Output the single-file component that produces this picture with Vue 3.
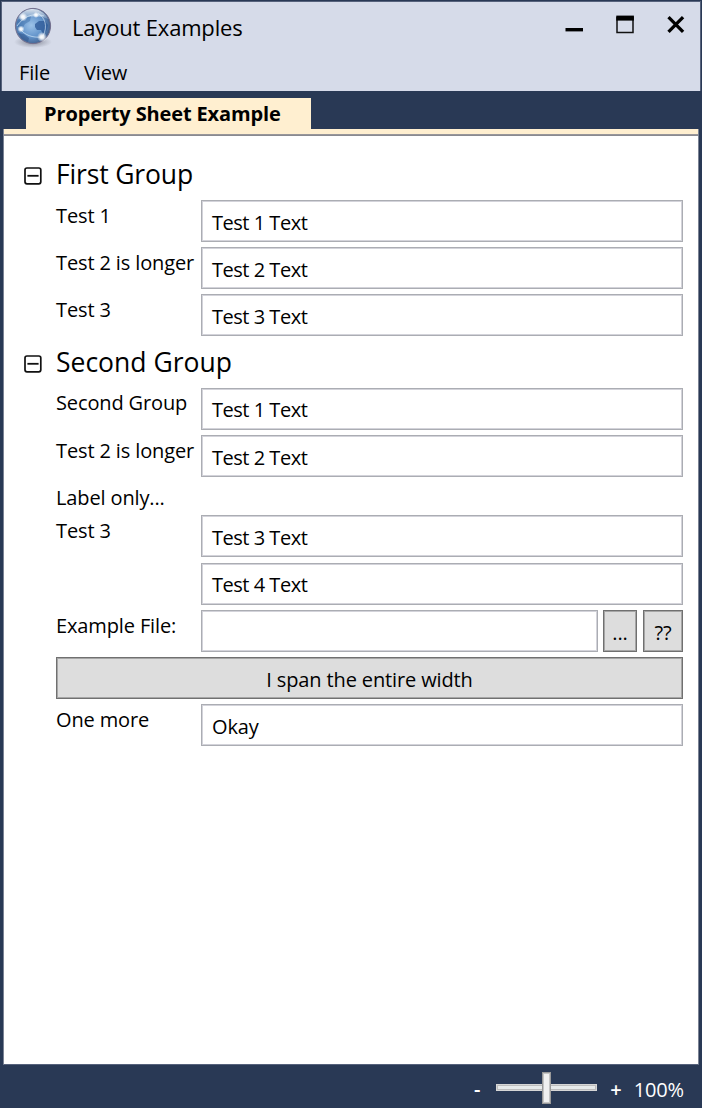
<script setup>
const groups = [
  {
    title: 'First Group',
    cls: 'first',
    rows: [
      { label: 'Test 1', text: 'Test 1 Text', h: 47 },
      { label: 'Test 2 is longer', text: 'Test 2 Text', h: 47 },
      { label: 'Test 3', text: 'Test 3 Text', h: 47 },
    ],
  },
  {
    title: 'Second Group',
    cls: 'second',
    rows: [
      { label: 'Second Group', text: 'Test 1 Text', h: 47, raised: true },
      { label: 'Test 2 is longer', text: 'Test 2 Text', h: 48 },
      { label: 'Label only...', h: 32, raised: true },
      { label: 'Test 3', text: 'Test 3 Text', h: 48 },
      { label: '', text: 'Test 4 Text', h: 47, raised: true },
      { label: 'Example File:', text: '', buttons: ['...', '??'], h: 47 },
      { wide: 'I span the entire width', h: 47 },
      { label: 'One more', text: 'Okay', h: 42 },
    ],
  },
]
</script>

<template>
  <div class="window">
    <header class="chrome">
      <div class="titlebar">
        <svg class="globe" width="40" height="42" viewBox="0 0 40 42">
          <defs>
            <radialGradient id="sea" cx="45%" cy="48%" r="55%">
              <stop offset="0" stop-color="#9cc2e8" />
              <stop offset=".6" stop-color="#6394cb" />
              <stop offset="1" stop-color="#41618f" />
            </radialGradient>
            <radialGradient id="shade">
              <stop offset="0" stop-color="#626675" stop-opacity=".75" />
              <stop offset="1" stop-color="#777b89" stop-opacity="0" />
            </radialGradient>
            <radialGradient id="glow">
              <stop offset="0" stop-color="#fff" />
              <stop offset=".4" stop-color="#fff" stop-opacity=".85" />
              <stop offset="1" stop-color="#fff" stop-opacity="0" />
            </radialGradient>
            <linearGradient id="gloss" x1="0" y1="0" x2="0" y2="1">
              <stop offset="0" stop-color="#fff" stop-opacity=".8" />
              <stop offset="1" stop-color="#fff" stop-opacity=".1" />
            </linearGradient>
          </defs>
          <ellipse cx="21" cy="36" rx="19" ry="6" fill="url(#shade)" />
          <circle cx="21" cy="20" r="17.6" fill="url(#sea)" stroke="#746f8d" stroke-width="1" />
          <path d="M8 11l6-6 8-1 1 4-4 2-1 5-5 3-3 5-4-2-1-5z" fill="#2e5e9c" opacity=".4" />
          <path d="M23 18l4-3 6 0 3 4-1 5-4 4-2-4-4 0-2-3z" fill="#2f5b98" opacity=".8" />
          <path d="M6 27l6 1 5 4-1 4-6-3z" fill="#284d85" opacity=".5" />
          <path d="M5 14C9 5 16 3 21 3s12 3 15 10C28 9 14 10 5 14z" fill="url(#gloss)" />
          <path d="M8 23c5 6 12 9 22 8M26 7c7 5 10 13 5 23M5 20C11 11 21 6 32 10" fill="none" stroke="#e3f3ff" stroke-width="1" opacity=".6" />
          <circle cx="11" cy="11" r="4.5" fill="url(#glow)" />
          <circle cx="30" cy="31" r="5" fill="url(#glow)" />
          <circle cx="9" cy="23" r="3.5" fill="url(#glow)" />
          <circle cx="24" cy="9" r="3" fill="url(#glow)" />
        </svg>
        <span class="title">Layout Examples</span>
        <svg class="controls" width="130" height="30" viewBox="0 0 130 30">
          <rect x="5.5" y="18" width="17.5" height="3.4" fill="#000" />
          <path d="M57 7.5h16v15H57z" fill="none" stroke="#111" stroke-width="1.5" />
          <rect x="56.3" y="5.6" width="17.6" height="5" fill="#000" />
          <path d="M108.5 7.2l14.6 14.6M123.1 7.2l-14.6 14.6" stroke="#000" stroke-width="3.3" fill="none" />
        </svg>
      </div>
      <nav class="menu">
        <span class="m-file">File</span>
        <span class="m-view">View</span>
      </nav>
    </header>

    <div class="tabs"><div class="tab"><span>Property Sheet Example</span></div></div>

    <main class="sheet">
      <section v-for="g in groups" :key="g.title" :class="['group', g.cls]">
        <h2 class="heading">
          <svg width="18" height="18" viewBox="0 0 18 18">
            <rect x="1" y="1" width="15.8" height="15.8" rx="2" fill="none" stroke="#111" stroke-width="1.7" />
            <path d="M3.4 8.8h11.2" stroke="#111" stroke-width="1.8" />
          </svg>
          <span>{{ g.title }}</span>
        </h2>
        <div v-for="(r, i) in g.rows" :key="i" :class="['row', { raised: r.raised }]" :style="{ height: r.h + 'px' }">
          <button v-if="r.wide" class="btn wide">{{ r.wide }}</button>
          <template v-else>
            <label class="label">{{ r.label }}</label>
            <div v-if="r.text !== undefined" class="field">{{ r.text }}</div>
            <button v-for="(b, n) in r.buttons" :key="b" :class="['btn', n ? 'help' : 'browse']">{{ b }}</button>
          </template>
        </div>
      </section>
    </main>

    <footer class="status">
      <span class="minus">-</span>
      <div class="slider"><i class="track"></i><i class="thumb"></i></div>
      <span class="plus">+</span>
      <span class="percent">100%</span>
    </footer>
  </div>
</template>

<style>
body {
  margin: 0;
  overflow: hidden;
}
</style>

<style scoped>
* {
  box-sizing: border-box;
}
.window {
  width: 702px;
  height: 1108px;
  background: #293955;
  display: flex;
  flex-direction: column;
  font: 20px/28px "Open Sans", "Noto Sans", sans-serif;
  letter-spacing: -0.13px;
  color: #000;
  padding-top: 1px;
  white-space: nowrap;
}
.chrome {
  margin: 0 1px;
  height: 90px;
  flex: none;
  background: #d6dbe9;
  border: 1px solid #56627c;
  border-bottom: 0;
}
.titlebar {
  display: flex;
  height: 54px;
}
.globe {
  margin: 4px 0 0 10px;
  flex: none;
}
.title {
  font-size: 22px;
  line-height: 30px;
  margin: 10px 0 0 20px;
  letter-spacing: -0.18px;
}
.controls {
  margin: 8px 10px 0 auto;
}
.menu {
  display: flex;
  padding-top: 3px;
}
.m-file {
  margin-left: 17px;
  width: 65px;
}
.tabs {
  height: 38px;
  padding: 7px 0 0 26px;
  flex: none;
}
.tab {
  width: 285px;
  height: 31px;
  background: #ffefd0;
  padding-left: 18px;
  font-weight: 700;
  line-height: 31px;
}
.sheet {
  flex: none;
  height: 936px;
  margin: 0 3px;
  border: 1px solid #7b8394;
  border-top: 0;
  border-bottom-color: #56627c;
  background: linear-gradient(#ffefd0 0 5px, #98969a 5px 6px, #8a8a90 6px 7px, #fff 7px);
  padding: 7px 15px 0 20px;
}
.heading {
  margin: 0;
  display: flex;
  align-items: center;
  font-size: 26.5px;
  font-weight: 400;
  letter-spacing: 0;
}
.heading span {
  margin: -4px 0 0 14px;
}
.first .heading {
  height: 64px;
  padding-top: 16px;
  letter-spacing: -0.15px;
}
.second .heading {
  height: 47px;
  padding-bottom: 1px;
}
.row {
  display: flex;
  padding-left: 32px;
}
.label {
  width: 145px;
  flex: none;
  padding-top: 2px;
}
.field {
  flex: 1;
  height: 42px;
  border: 1px solid #abadb3;
  box-shadow: inset 0 0 0 1px #d3d3da;
  padding-left: 10px;
  line-height: 43px;
  letter-spacing: -0.48px;
}
.raised .label {
  padding-top: 1px;
}
.raised .field {
  line-height: 41px;
}
.second .row:last-child .field {
  letter-spacing: -0.15px;
}
.btn {
  height: 42px;
  border: 1px solid #707070;
  box-shadow: inset 0 0 0 1px #a6a6a6;
  background: #ddd;
  font: inherit;
  letter-spacing: inherit;
  color: #000;
  padding: 3px 0 0;
}
.wide {
  width: 100%;
}
.browse {
  width: 34px;
  margin-left: 5px;
}
.help {
  width: 40px;
  margin-left: 6px;
}
.status {
  flex: none;
  height: 43px;
  display: flex;
  align-items: center;
  justify-content: flex-end;
  padding: 7px 18px 0 0;
  color: #fff;
}
.minus,
.plus {
  font-weight: 600;
}
.minus {
  margin-top: -3px;
}
.plus {
  margin-top: -1px;
}
.slider {
  width: 101px;
  height: 32px;
  margin: -5px 13px 0 16px;
  display: grid;
  align-items: center;
  justify-items: center;
}
.track,
.thumb {
  grid-area: 1 / 1;
}
.track {
  width: 101px;
  height: 7px;
  background: #e7eaea;
  border: 1px solid #d6d6d6;
  box-shadow: inset 0 0 0 1px #bdbdbd;
}
.thumb {
  width: 9px;
  height: 32px;
  background: #f0f0f0;
  border: 1px solid #999;
  box-shadow: inset 0 0 0 1px #c4c4c4;
}
.percent {
  margin-left: 12px;
}
</style>
